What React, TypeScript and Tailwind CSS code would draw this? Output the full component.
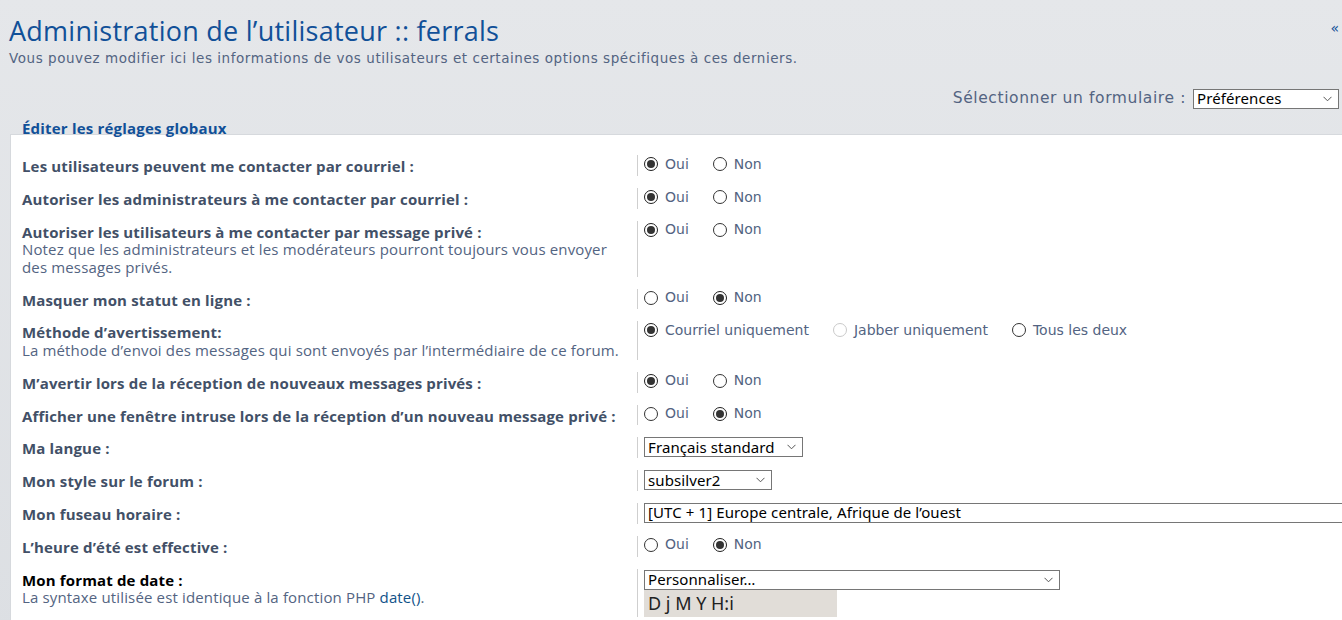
import React from "react"

// phpBB-style ACP user preferences page

type Opt = { label: string; checked?: boolean; disabled?: boolean }

const Radio: React.FC<{ checked?: boolean; disabled?: boolean }> = ({ checked, disabled }) => {
    if (disabled) {
        return <span className="w-[14px] h-[14px] rounded-full border border-[#cacaca] bg-white shrink-0" />
    }
    return (
        <span
            className={`w-[14px] h-[14px] rounded-full border bg-white shrink-0 flex items-center justify-center ${
                checked ? "border-[#1f1f1f]" : "border-[#333]"
            }`}
        >
            {checked && <span className="w-[8px] h-[8px] rounded-full bg-[#333]" />}
        </span>
    )
}

const Radios: React.FC<{ opts: Opt[] }> = ({ opts }) => (
    <div className="flex items-center h-[16px] gap-[24px] font-['DejaVu_Sans',sans-serif] text-[14px] text-[#536482]">
        {opts.map((o) => (
            <label key={o.label} className="flex items-center gap-[7px]">
                <Radio checked={o.checked} disabled={o.disabled} />
                <span>{o.label}</span>
            </label>
        ))}
    </div>
)

const Chevron = () => (
    <svg width="9" height="6" viewBox="0 0 9 6" className="shrink-0">
        <path d="M0.5 0.8 L4.5 4.8 L8.5 0.8" fill="none" stroke="#555" strokeWidth="1" />
    </svg>
)

const Select: React.FC<{ value: string; w: string }> = ({ value, w }) => (
    <div
        className={`${w} shrink-0 h-[20px] border border-[#767676] bg-white flex items-center justify-between pl-[3px] pr-[6px] font-['Noto_Sans',sans-serif] text-[15px] tracking-[0.1px] text-black leading-none`}
    >
        <span>{value}</span>
        <Chevron />
    </div>
)

const yesNo = (yes: boolean): Opt[] => [
    { label: "Oui", checked: yes },
    { label: "Non", checked: !yes },
]

type Row = {
    label: string
    desc?: React.ReactNode
    dark?: boolean
    field: React.ReactNode
    pt?: string
}

const rows: Row[] = [
    { label: "Les utilisateurs peuvent me contacter par courriel :", field: <Radios opts={yesNo(true)} /> },
    { label: "Autoriser les administrateurs à me contacter par courriel :", field: <Radios opts={yesNo(true)} /> },
    {
        label: "Autoriser les utilisateurs à me contacter par message privé :",
        desc: "Notez que les administrateurs et les modérateurs pourront toujours vous envoyer des messages privés.",
        field: <Radios opts={yesNo(true)} />,
    },
    { label: "Masquer mon statut en ligne :", field: <Radios opts={yesNo(false)} /> },
    {
        label: "Méthode d’avertissement:",
        desc: "La méthode d’envoi des messages qui sont envoyés par l’intermédiaire de ce forum.",
        field: (
            <Radios
                opts={[
                    { label: "Courriel uniquement", checked: true },
                    { label: "Jabber uniquement", disabled: true },
                    { label: "Tous les deux" },
                ]}
            />
        ),
    },
    { label: "M’avertir lors de la réception de nouveaux messages privés :", field: <Radios opts={yesNo(true)} /> },
    { label: "Afficher une fenêtre intruse lors de la réception d’un nouveau message privé :", field: <Radios opts={yesNo(false)} /> },
    { label: "Ma langue :", field: <Select value="Français standard" w="w-[159px]" />, pt: "pt-0" },
    { label: "Mon style sur le forum :", field: <Select value="subsilver2" w="w-[128px]" />, pt: "pt-0" },
    {
        label: "Mon fuseau horaire :",
        field: <Select value="[UTC + 1] Europe centrale, Afrique de l’ouest" w="w-[760px]" />,
        pt: "pt-0",
    },
    { label: "L’heure d’été est effective :", field: <Radios opts={yesNo(false)} /> },
    {
        label: "Mon format de date :",
        dark: true,
        desc: (
            <>
                La syntaxe utilisée est identique à la fonction PHP <span className="text-[#105289]">date()</span>.
            </>
        ),
        pt: "pt-[1px]",
        field: (
            <div className="flex flex-col">
                <Select value="Personnaliser…" w="w-[416px]" />
                <div className="w-[193px] h-[27px] bg-[#e1ddd8] flex items-center pl-[4px] font-['Noto_Sans',sans-serif] text-[18px] text-[#222]">
                    D j M Y H:i
                </div>
            </div>
        ),
    },
]

export default function App() {
    return (
        <div className="min-h-screen overflow-hidden bg-gradient-to-b from-[#e5e7ea] to-[#dcdfe3]">
            <div className="flex justify-between pl-[9px] pr-[3px] pt-[15px]">
                <h1 className="font-['Open_Sans',sans-serif] text-[27px] tracking-[0.25px] leading-[32px] text-[#115098]">
                    Administration de l’utilisateur :: ferrals
                </h1>
                <span className="font-['DejaVu_Sans',sans-serif] text-[14px] leading-none text-[#115098] mt-[6px]">«</span>
            </div>
            <p className="pl-[9px] mt-[2px] font-['DejaVu_Sans',sans-serif] text-[13.5px] tracking-[0.55px] leading-[18px] text-[#536482]">
                Vous pouvez modifier ici les informations de vos utilisateurs et certaines options spécifiques à ces derniers.
            </p>

            <div className="flex justify-end items-center gap-[7px] pr-[3px] mt-[20px]">
                <span className="font-['DejaVu_Sans',sans-serif] text-[15.5px] tracking-[0.6px] text-[#536482]">
                    Sélectionner un formulaire :
                </span>
                <Select value="Préférences" w="w-[146px]" />
            </div>

            <div className="relative z-10 mt-[9px] pl-[22px] font-['Open_Sans',sans-serif] font-bold text-[15px] tracking-[0.2px] leading-[18px] text-[#115098]">
                Éditer les réglages globaux
            </div>

            <div className="-mt-[3px] ml-[10px] bg-white border-l border-t border-[#d6d9dd] pt-[14px] pb-[20px]">
                {rows.map((r) => (
                    <div key={r.label} className="flex py-[6px]">
                        <div className="w-[626px] shrink-0 pl-[11px] pt-[3px] pb-[0.3px] font-['Open_Sans',sans-serif] text-[15px] tracking-[0.15px] leading-[17.5px]">
                            <div className={`font-bold ${r.dark ? "text-black" : "text-[#425067]"}`}>{r.label}</div>
                            {r.desc && <div className="max-w-[600px] text-[#536482]">{r.desc}</div>}
                        </div>
                        <div className={`flex-1 min-w-0 border-l border-[#cfcfcf] pl-[6px] ${r.pt ?? "pt-[1px]"}`}>{r.field}</div>
                    </div>
                ))}
            </div>
        </div>
    )
}
